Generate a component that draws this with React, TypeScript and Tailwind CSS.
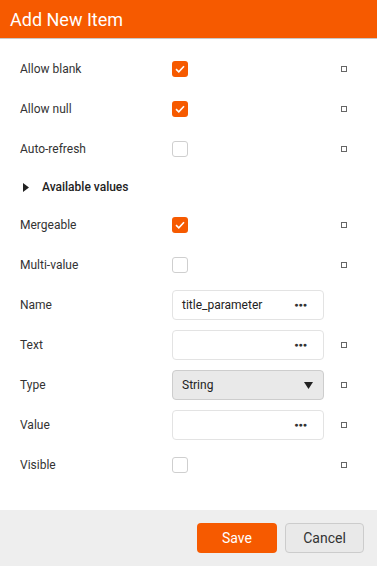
const Checkbox = ({ checked }: { checked?: boolean }) =>
  checked ? (
    <span className="flex h-4 w-4 items-center justify-center rounded-[3px] bg-[#f65a00]">
      <svg width="10" height="8" viewBox="0 0 10 8" fill="none">
        <path d="M1 4.2 L3.8 6.8 L9 1.2" stroke="white" strokeWidth="1.6" />
      </svg>
    </span>
  ) : (
    <span className="block h-4 w-4 rounded-[3px] border border-[#cfcfcf] bg-white" />
  )

const Mark = () => <span className="block h-[6px] w-[6px] border border-[#666]" />

const Row = ({ label, children, mark = true }: { label: string; children: React.ReactNode; mark?: boolean }) => (
  <div className="flex h-10 items-center">
    <div className="w-[172px] pl-5 text-[12px] text-[#333]">{label}</div>
    <div className="flex w-[152px] items-center">{children}</div>
    <div className="flex flex-1 items-center pl-[17px]">{mark && <Mark />}</div>
  </div>
)

const TextBox = ({ value }: { value?: string }) => (
  <div className="flex h-[30px] w-full items-center justify-between rounded border border-[#e3e3e3] bg-white pr-4 pl-[9px] text-[12px] text-[#222]">
    <span>{value}</span>
    <span className="text-[7px] text-[#333]">●●●</span>
  </div>
)

export default function App() {
  return (
    <div className="flex h-[566px] w-[377px] flex-col bg-white" style={{ fontFamily: 'Roboto, "Liberation Sans", sans-serif' }}>
      <header className="flex h-[39px] items-center border-b border-[#c8c8c8] bg-[#f65a00] pl-[10px]">
        <h1 className="text-[18px] text-white">Add New Item</h1>
      </header>
      <main className="flex-1 pt-[10px]">
        <Row label="Allow blank">
          <Checkbox checked />
        </Row>
        <Row label="Allow null">
          <Checkbox checked />
        </Row>
        <Row label="Auto-refresh">
          <Checkbox />
        </Row>
        <div className="flex h-9 items-center pl-[23px] text-[12px] font-medium text-[#222]">
          <svg width="6" height="9" viewBox="0 0 6 9" className="mr-[13px]">
            <path d="M0 0 L6 4.5 L0 9 Z" fill="#222" />
          </svg>
          Available values
        </div>
        <Row label="Mergeable">
          <Checkbox checked />
        </Row>
        <Row label="Multi-value">
          <Checkbox />
        </Row>
        <Row label="Name" mark={false}>
          <TextBox value="title_parameter" />
        </Row>
        <Row label="Text">
          <TextBox />
        </Row>
        <Row label="Type">
          <div className="flex h-[30px] w-full items-center justify-between rounded border border-[#cdcdcd] bg-[#e9e9e9] pr-[10px] pl-[9px] text-[12px] text-[#222]">
            <span>String</span>
            <svg width="9" height="7" viewBox="0 0 9 7">
              <path d="M0 0 L9 0 L4.5 7 Z" fill="#222" />
            </svg>
          </div>
        </Row>
        <Row label="Value">
          <TextBox />
        </Row>
        <Row label="Visible">
          <Checkbox />
        </Row>
      </main>
      <footer className="flex h-[56px] items-center justify-end gap-2 bg-[#eeeeee] pr-[13px]">
        <button className="h-[30px] w-20 rounded bg-[#f65a00] text-[14px] text-white">Save</button>
        <button className="h-[30px] w-[79px] rounded border border-[#cccccc] bg-[#e9e9e9] text-[14px] text-[#333]">Cancel</button>
      </footer>
    </div>
  )
}
